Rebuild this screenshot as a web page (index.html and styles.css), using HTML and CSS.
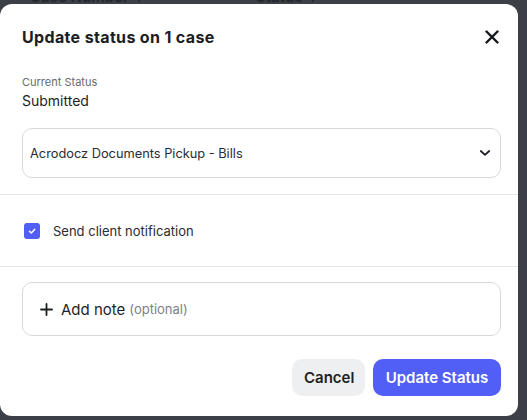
FILE: index.html
```html
<!DOCTYPE html>
<html>
<head>
<meta charset="utf-8">
<link rel="stylesheet" href="styles.css">
</head>
<body>
<div class="page">
  <div class="table-head">
    <span class="th th-case">Case Number ↑</span>
    <span class="th th-status">Status ↑</span>
  </div>
</div>
<div class="modal">
  <div class="modal-header">
    <h2 class="modal-title">Update status on 1 case</h2>
    <svg class="close" width="14" height="14" viewBox="0 0 14 14"><path d="M1.5 1.5L12.5 12.5M12.5 1.5L1.5 12.5" stroke="#15171c" stroke-width="2.4" stroke-linecap="round"/></svg>
  </div>
  <div class="status-block">
    <div class="label">Current Status</div>
    <div class="value">Submitted</div>
  </div>
  <div class="select">
    <span>Acrodocz Documents Pickup - Bills</span>
    <svg width="12" height="8" viewBox="0 0 12 8"><path d="M1.8 2L6 5.8L10.2 2" fill="none" stroke="#1d1f24" stroke-width="1.8" stroke-linecap="round" stroke-linejoin="round"/></svg>
  </div>
  <div class="divider"></div>
  <div class="check-row">
    <span class="checkbox"><svg width="10" height="10" viewBox="0 0 10 10"><path d="M2.5 5.2L4.3 7L7.6 3.4" fill="none" stroke="#fff" stroke-width="1.5" stroke-linecap="round" stroke-linejoin="round"/></svg></span>
    <span class="check-label">Send client notification</span>
  </div>
  <div class="divider"></div>
  <div class="note">
    <svg width="13" height="13" viewBox="0 0 13 13"><path d="M6.5 1V12M1 6.5H12" stroke="#1d1f24" stroke-width="1.8" stroke-linecap="round"/></svg>
    <span class="note-text">Add note</span>
    <span class="note-opt">(optional)</span>
  </div>
  <div class="actions">
    <button class="btn btn-cancel">Cancel</button>
    <button class="btn btn-primary">Update Status</button>
  </div>
</div>
</body>
</html>
```
FILE: styles.css
```css
* { box-sizing: border-box; }
html, body { margin: 0; padding: 0; }
body {
  background: #3c3f46;
  width: 527px;
  height: 420px;
  overflow: hidden;
  font-family: Inter, "Noto Sans", sans-serif;
  position: relative;
}
.table-head {
  display: flex;
  height: 20px;
  margin-top: -13px;
  font-size: 15px;
  font-weight: 600;
  color: #24262b;
}
.th-case { margin-left: 30px; width: 226px; }
.modal {
  position: absolute;
  left: 0;
  top: 4px;
  width: 518px;
  height: 412px;
  background: #fff;
  border-radius: 12px;
  padding: 22px 17px 20px 22px;
  display: flex;
  flex-direction: column;
  color: #24262b;
}
.modal-header {
  display: flex;
  align-items: center;
  justify-content: space-between;
  height: 22px;
}
.modal-title {
  margin: 0;
  font-size: 16px;
  font-weight: 700;
  letter-spacing: 0.35px;
  color: #1b1d22;
  line-height: 22px;
}
.close { margin-right: 2px; }
.status-block { margin-top: 27px; }
.label {
  font-size: 11px;
  line-height: 14px;
  color: #666a72;
}
.value {
  margin-top: 3px;
  font-size: 14px;
  line-height: 18px;
  color: #1d1f24;
}
.select {
  margin-top: 18px;
  height: 50px;
  border: 1px solid #d8d9dc;
  border-radius: 10px;
  display: flex;
  align-items: center;
  justify-content: space-between;
  padding: 0 9px 0 7px;
  font-size: 12.8px;
  color: #2a2c31;
}
.divider {
  height: 1px;
  background: #e6e7ea;
  margin: 16px -17px 0 -22px;
}
.check-row {
  display: flex;
  align-items: center;
  height: 71px;
  padding-left: 2px;
}
.checkbox {
  width: 16px;
  height: 16px;
  border-radius: 3px;
  background: #525ff6;
  display: flex;
  align-items: center;
  justify-content: center;
}
.check-label {
  margin-left: 13px;
  font-size: 13px;
  color: #2a2c31;
}
.check-row + .divider { margin-top: 0; }
.note {
  margin-top: 15px;
  height: 54px;
  border: 1px solid #d8d9dc;
  border-radius: 10px;
  display: flex;
  align-items: center;
  padding-left: 17px;
}
.note-text {
  margin-left: 8px;
  font-size: 15px;
  color: #1d1f24;
}
.note-opt {
  margin-left: 4px;
  font-size: 13px;
  color: #7c8088;
}
.actions {
  margin-top: auto;
  display: flex;
  justify-content: flex-end;
  gap: 8px;
}
.btn {
  height: 37px;
  border: none;
  border-radius: 10px;
  font-family: inherit;
  font-size: 15px;
  font-weight: 600;
  padding: 0 12px;
}
.btn-cancel {
  background: #eeeff1;
  color: #1d1f24;
  width: 73px;
}
.btn-primary {
  background: #525ff6;
  color: #fff;
  width: 128px;
}
```
